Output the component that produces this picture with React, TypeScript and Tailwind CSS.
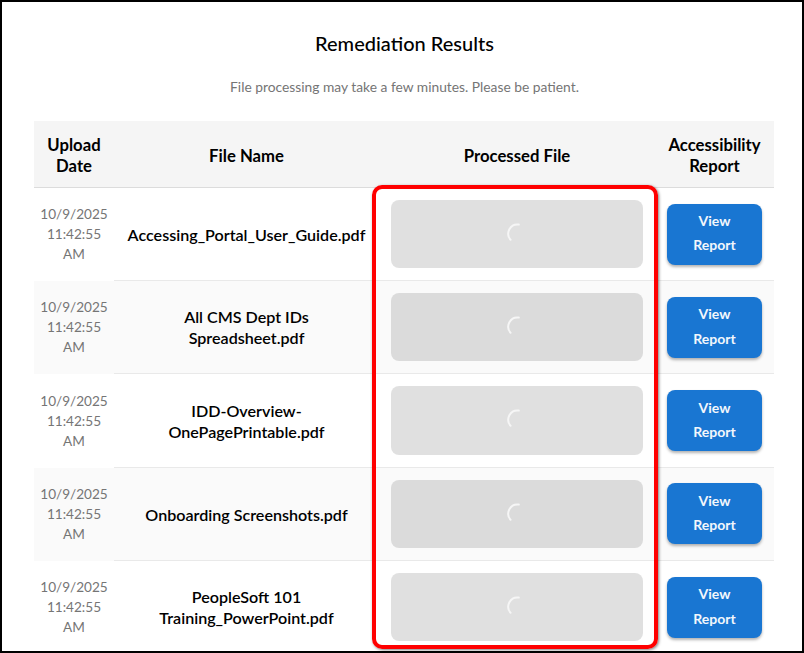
const rows = [
  ["Accessing_Portal_User_Guide.pdf"],
  ["All CMS Dept IDs", "Spreadsheet.pdf"],
  ["IDD-Overview-", "OnePagePrintable.pdf"],
  ["Onboarding Screenshots.pdf"],
  ["PeopleSoft 101", "Training_PowerPoint.pdf"],
];

function Spinner() {
  return (
    <svg width="24" height="24" viewBox="0 0 24 24" fill="none" className="text-[#f6f6f6]">
      <path d="M13.8 2.6A9.2 9.2 0 0 0 5.6 17.8" stroke="currentColor" strokeWidth="2" strokeLinecap="round" />
    </svg>
  );
}

function Row({ name, index }: { name: string[]; index: number }) {
  const odd = index % 2 === 1;
  return (
    <div className={`grid h-[93.3px] grid-cols-[80px_265px_276px_119px] ${odd ? "bg-[#fafafa]" : "bg-white"}`}>
      <div className="flex flex-col items-center justify-center pb-[0.6px] text-[13.6px] leading-[20px] text-[#757575]">
        <span>10/9/2025</span>
        <span>11:42:55</span>
        <span>AM</span>
      </div>
      <div className="flex flex-col items-center justify-center border-b border-[#e9e9e9] pt-[0.6px] text-[16.1px] leading-[21px] font-semibold text-black">
        {name.map((n) => (
          <span key={n}>{n}</span>
        ))}
      </div>
      <div className="flex items-center justify-center border-b border-[#e9e9e9]">
        <div className="flex h-[68.3px] w-[252px] items-center justify-center rounded-lg bg-black/[.12]">
          <Spinner />
        </div>
      </div>
      <div className="flex items-center justify-center border-b border-[#e9e9e9] pt-[0.5px]">
        <div className="flex h-[61px] w-[95px] flex-col items-center justify-center rounded-lg bg-[#1976d2] pb-[1.4px] text-[14px] leading-[24.4px] font-bold text-[#f2f7fc] shadow-[0_2px_3px_rgba(0,0,0,0.3)]">
          <span>View</span>
          <span>Report</span>
        </div>
      </div>
    </div>
  );
}

export default function App() {
  return (
    <div className="relative h-[653px] w-[804px] overflow-hidden border-2 border-black bg-white font-['Lato',sans-serif]">
      <div className="px-[32px]">
        <div className="pl-[5px]">
          <h1 className="pt-[29px] text-center text-[20px] leading-[24px] font-medium text-black">Remediation Results</h1>
          <p className="mt-[21px] text-center text-[13.8px] leading-[22px] text-[#757575]">
            File processing may take a few minutes. Please be patient.
          </p>
        </div>
        <div className="mt-[23px] w-[740px]">
          <div className="grid h-[66.7px] grid-cols-[80px_265px_276px_119px] border-b border-[#dcdcdc] bg-[#f5f5f5] pt-[5px] text-center text-[16.7px] leading-[21px] font-bold text-black">
            <div className="flex items-center justify-center">Upload<br />Date</div>
            <div className="flex items-center justify-center">File Name</div>
            <div className="flex items-center justify-center">Processed File</div>
            <div className="flex items-center justify-center">Accessibility<br />Report</div>
          </div>
          {rows.map((name, i) => (
            <Row key={i} name={name} index={i} />
          ))}
        </div>
      </div>
      <div className="absolute top-[183px] left-[370px] h-[464px] w-[286px] rounded-[10px] border-4 border-[#ff0000] shadow-[1px_1px_3px_rgba(0,0,0,0.5)]" />
    </div>
  );
}
